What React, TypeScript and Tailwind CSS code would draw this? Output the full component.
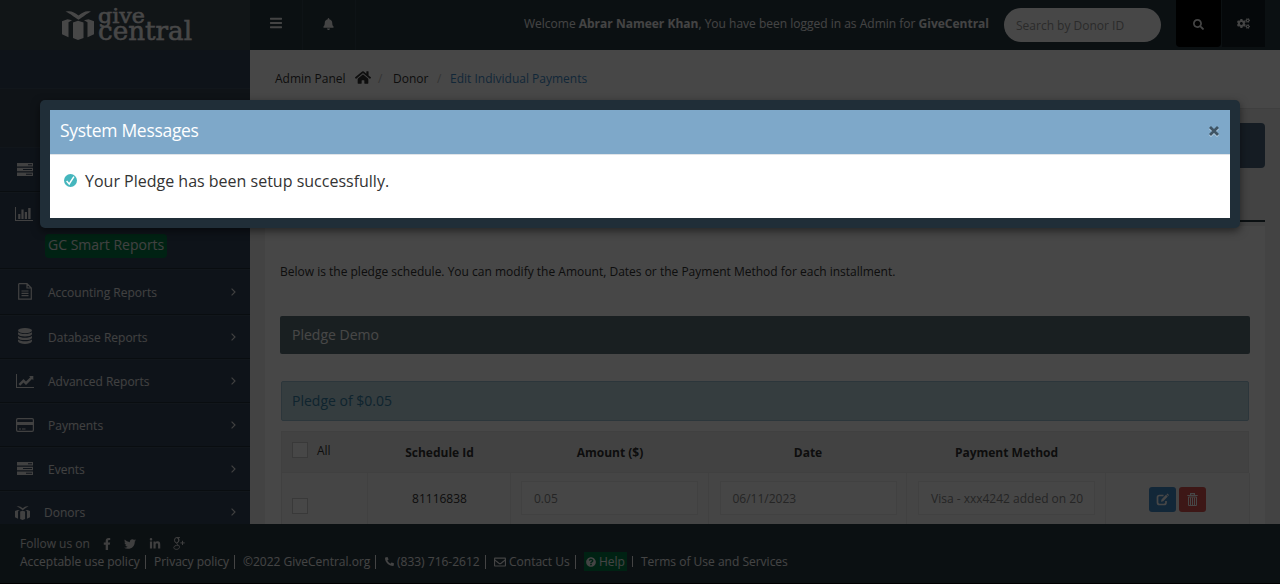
import type { ReactNode } from "react";
import {
  FaBars,
  FaBell,
  FaCogs,
  FaFacebookF,
  FaHome,
  FaLinkedinIn,
  FaPhoneAlt,
  FaQuestionCircle,
  FaRegEnvelope,
  FaSearch,
  FaTwitter,
} from "react-icons/fa";

function GiftIcon({ className }: { className: string }) {
  return (
    <svg viewBox="0 0 32 33" className={className} fill="currentColor" preserveAspectRatio="none">
      <path d="M3.500 3C9 1.500 12 3.500 16.500 7C21 3.500 24 1.500 29 3C25 4.500 22 8 16.500 11.500C11 8 8 4.500 3.500 3Z" />
      <path d="M0 13L5.500 11L10 12L6.500 14V30L0 27Z" />
      <path d="M32 13L26.500 11L22 12L25.500 14V30L32 27Z" />
      <path d="M11 14.500L16 12.500L21.500 14.500V31L16 33L11 31Z" />
    </svg>
  );
}

function TasksIcon() {
  return (
    <svg viewBox="0 0 16 13" className="h-[13px] w-4" fill="currentColor">
      <path fillRule="evenodd" d="M0 0H16V3.500H0ZM11 1.200V2.300H15V1.200Z" />
      <path fillRule="evenodd" d="M0 4.800H16V8.200H0ZM6 6V7H15V6Z" />
      <path fillRule="evenodd" d="M0 9.500H16V13H0ZM9 10.700V11.800H15V10.700Z" />
    </svg>
  );
}

function BarChartIcon() {
  return (
    <svg viewBox="0 0 18 14" className="h-[14px] w-[18px]" fill="currentColor">
      <path d="M0 0H1V13H18V14H0ZM3.200 7H5.400V12H3.200ZM6.400 2.500H8.600V12H6.400ZM9.800 5H12V12H9.800ZM13.200 1H15.600V12H13.200Z" />
    </svg>
  );
}

function FileIcon() {
  return (
    <svg viewBox="0 0 14 17" className="h-[17px] w-[14px]" fill="none" stroke="currentColor" strokeWidth="1.200">
      <path d="M1.200 .7H9L13.300 5V16.200H.7V1.200ZM9 .7V5H13.300M3.500 8H10.500M3.500 10.300H10.500M3.500 12.600H10.500" />
    </svg>
  );
}

function DatabaseIcon() {
  return (
    <svg viewBox="0 0 14 16" className="mb-px h-4 w-[14px]" fill="currentColor">
      <ellipse cx="7" cy="2.600" rx="7" ry="2.600" />
      <path d="M0 4.200C2.500 6.600 11.500 6.600 14 4.200V6.300C12.500 9.200 1.500 9.200 0 6.300Z" />
      <path d="M0 7.900C2.500 10.300 11.500 10.300 14 7.900V9.900C12.500 12.800 1.500 12.800 0 9.900Z" />
      <path d="M0 11.500C2.500 13.900 11.500 13.900 14 11.500V13.300C12.500 16.900 1.500 16.900 0 13.300Z" />
    </svg>
  );
}

function LineChartIcon() {
  return (
    <svg viewBox="0 0 18 14" className="h-[14px] w-[18px]" fill="currentColor">
      <path d="M0 0H1V13H18V14H0Z" />
      <path d="M2.500 10L7.500 5L10 7.500L14.300 3.200L13 2H17.300V6.300L16 5L10 10.900L7.500 8.400L4.200 11.700Z" />
    </svg>
  );
}

function CardIcon() {
  return (
    <svg viewBox="0 0 18 14" className="h-[14px] w-[18px]">
      <rect x=".6" y=".6" width="16.800" height="12.800" rx="1.300" fill="none" stroke="currentColor" strokeWidth="1.200" />
      <path d="M1 4H17V7H1ZM3 10.500H5V11.500H3ZM6 10.500H9.500V11.500H6Z" fill="currentColor" />
    </svg>
  );
}

function Chevron() {
  return (
    <svg viewBox="0 0 5 8" className="mr-[14px] mb-px h-2 w-[5px]" fill="none" stroke="currentColor" strokeWidth="1.100">
      <path d="M.6 .6L4 4L.6 7.400" />
    </svg>
  );
}

function GooglePlusIcon() {
  return (
    <svg viewBox="0 0 12 13" className="h-[13px] w-3" fill="none" stroke="currentColor" strokeWidth="1">
      <ellipse cx="3.600" cy="3.200" rx="2.100" ry="2.600" />
      <path d="M3.500 .6H7M4 5.800C3.300 7 4.500 7.200 5.300 8C8 10.500 5.500 12.400 3.500 12.400C1 12.400 -.3 10.300 2 8.900C3 8.300 4 8.300 5 8.200M5.200 1C6.500 2.500 6.200 5 4.300 5.800M9.500 3.800V8M7.400 5.900H11.700" />
    </svg>
  );
}

function EditIcon() {
  return (
    <svg viewBox="0 0 13 13" className="h-[13px] w-[13px]" fill="none" stroke="currentColor">
      <path strokeWidth="1.700" d="M7.500 2.500H3.500Q1.500 2.500 1.500 4.500V9.500Q1.500 11.500 3.500 11.500H8Q10 11.500 10 9.500V8" />
      <path fill="currentColor" stroke="none" d="M5 8.800L5.500 6.500L10 1.800L11.800 3.500L7.200 8.200ZM10.500 1.200L11.300 .4L13 2L12.200 2.900Z" />
    </svg>
  );
}

function TrashIcon() {
  return (
    <svg viewBox="0 0 11 13" className="h-[13px] w-[11px]" fill="none" stroke="currentColor">
      <path strokeWidth="1.200" d="M.3 2.500H10.700M3.600 2.300V.7H7.400V2.300" />
      <path strokeWidth="1" d="M1.500 4H9.500V12.500H1.500ZM3.500 4.500V12M5.500 4.500V12M7.500 4.500V12" />
    </svg>
  );
}

function Logo() {
  return (
    <div className="flex h-[50px] w-[250px] shrink-0 bg-[#3f4b55] pl-[62px] pt-[4px] text-white">
      <GiftIcon className="mt-[5px] h-[31px] w-8 shrink-0" />
      <svg viewBox="0 0 96 44" className="ml-[3px] h-11 w-24" fill="currentColor">
        <g fontFamily="'DejaVu Serif', serif" stroke="currentColor" strokeWidth=".5">
          <text x="1" y="18.500" fontSize="20" textLength="47" lengthAdjust="spacingAndGlyphs">give</text>
          <text x="1" y="35.500" fontSize="26" textLength="94" lengthAdjust="spacingAndGlyphs">central</text>
        </g>
      </svg>
    </div>
  );
}

function MenuRow({ icon, label, height }: { icon: ReactNode; label: string; height: string }) {
  return (
    <div className={`flex shrink-0 items-center border-b border-t border-b-[#222f3c] border-t-[#3f5060] ${height}`}>
      <span className="flex w-[48px]">
        <span className="flex w-[50px] shrink-0 justify-center pb-px">{icon}</span>
      </span>
      <span className="flex-1 pt-px">{label}</span>
      {label && <Chevron />}
    </div>
  );
}

function Sidebar() {
  return (
    <aside className="flex w-[250px] shrink-0 flex-col overflow-hidden bg-[#34465c] text-[#e8e8e8]">
      <div className="h-[38px] shrink-0" />
      <div className="h-[59px] shrink-0 border-t border-[#3f5060] bg-[#364552]" />
      <MenuRow icon={<TasksIcon />} label="" height="h-[45px]" />
      <div className="h-[77px] shrink-0 border-b border-t border-b-[#222f3c] border-t-[#3f5060]">
        <div className="flex h-[41px] items-center pl-[15px]">
          <BarChartIcon />
        </div>
        <span className="ml-[45px] inline-block h-6 rounded-sm bg-[#007a45] px-[3px] text-sm leading-[22px]">
          GC Smart Reports
        </span>
      </div>
      <MenuRow icon={<FileIcon />} label="Accounting Reports" height="h-[46px]" />
      <MenuRow icon={<DatabaseIcon />} label="Database Reports" height="h-[44px]" />
      <MenuRow icon={<LineChartIcon />} label="Advanced Reports" height="h-[44px]" />
      <MenuRow icon={<CardIcon />} label="Payments" height="h-[44px]" />
      <MenuRow icon={<TasksIcon />} label="Events" height="h-[44px]" />
      <div className="flex h-[42px] shrink-0 items-center border-t border-[#3f5060]">
        <GiftIcon className="ml-[15px] h-[15px] w-[15px]" />
        <span className="ml-[14px] flex-1">Donors</span>
        <Chevron />
      </div>
    </aside>
  );
}

function TopBar() {
  return (
    <header className="flex h-[50px] shrink-0 bg-[#293a43] text-[#f2f2f2]">
      <Logo />
      <div className="flex w-[53px] items-center justify-center border-r border-[#34454f] pb-1">
        <FaBars className="h-[14px] w-3" />
      </div>
      <div className="flex w-[53px] items-center justify-center border-r border-[#34454f] pb-[2px] pr-px">
        <FaBell className="h-3 w-[11px]" />
      </div>
      <p className="ml-auto whitespace-nowrap pr-[15px] leading-[47px]">
        Welcome <b>Abrar Nameer Khan</b>, You have been logged in as Admin for <b>GiveCentral</b>
      </p>
      <div className="mt-2 flex h-[34px] w-[157px] items-center rounded-full bg-white pl-3 pt-[2px] text-[#999999]">
        Search by Donor ID
      </div>
      <div className="ml-[15px] flex h-[47px] w-[45px] items-center justify-center rounded-b-sm bg-black pt-px">
        <FaSearch className="h-[11px] w-[11px]" />
      </div>
      <div className="ml-px mr-[15px] flex h-[47px] w-[43px] items-center justify-center bg-[#121d24]">
        <FaCogs className="h-[13px] w-[13px]" />
      </div>
    </header>
  );
}

function Field({ children }: { children: ReactNode }) {
  return (
    <div className="h-[34px] w-full overflow-hidden whitespace-nowrap border border-[#e9e9e9] bg-[#fbfbfb] pl-3 leading-[33px] text-[#858585]">
      {children}
    </div>
  );
}

function Checkbox() {
  return <span className="inline-block h-4 w-4 shrink-0 border border-[#cccccc] bg-white" />;
}

const columns = "grid grid-cols-[86px_143px_198px_198px_199px_144px]";

function PledgeTable() {
  return (
    <div className="mx-px mt-[10px] text-[#333333]">
      <div className={`${columns} h-[42px] border border-[#e6e6e6] bg-[#eeeeee] text-center font-bold leading-[42px]`}>
        <div className="flex items-start pl-[10px] pt-[10px] text-left font-normal leading-4">
          <Checkbox />
          <span className="pl-[9px] pt-px">All</span>
        </div>
        <div>Schedule Id</div>
        <div>Amount ($)</div>
        <div>Date</div>
        <div>Payment Method</div>
        <div />
      </div>
      <div className={`${columns} h-[52px] border-l border-[#e6e6e6] bg-[#f8f8f8]`}>
        <div className="border-r border-[#eaeaea] pl-[10px] pt-[25px]">
          <Checkbox />
        </div>
        <div className="border-r border-[#eaeaea] pl-px text-center leading-[52px]">81116838</div>
        <div className="border-r border-[#eaeaea] px-[10px] pt-2">
          <Field>0.05</Field>
        </div>
        <div className="border-r border-[#eaeaea] pl-[10.5px] pr-[9.5px] pt-2">
          <Field>06/11/2023</Field>
        </div>
        <div className="border-r border-[#eaeaea] pl-[11px] pr-[10px] pt-2">
          <Field>Visa - xxx4242 added on 20</Field>
        </div>
        <div className="flex gap-[3px] border-r border-[#eaeaea] pl-[43px] pt-[14px] text-white">
          <span className="flex h-[25px] w-[27px] items-center justify-center rounded-[3px] bg-[#428bca]">
            <EditIcon />
          </span>
          <span className="flex h-[25px] w-[27px] items-center justify-center rounded-[3px] bg-[#d9534f] pb-px">
            <TrashIcon />
          </span>
        </div>
      </div>
    </div>
  );
}

function Content() {
  return (
    <main className="flex min-w-0 flex-1 flex-col overflow-hidden bg-[#f0f0f0] text-[#333333]">
      <nav className="flex h-[59px] shrink-0 items-center border-b border-[#e0e0e0] bg-white pl-[25px]">
        <span className="w-[80px]">Admin Panel</span>
        <FaHome className="mb-[3px] h-[15px] w-4" />
        <span className="w-[22px] pl-[7px] text-[#bbbbbb]">/</span>
        <span className="w-[44px]">Donor</span>
        <span className="w-[13px] text-[#bbbbbb]">/</span>
        <span className="text-[#428bca]">Edit Individual Payments</span>
      </nav>
      <div className="mx-[15px] mt-[14px] h-[45px] shrink-0 rounded-sm bg-[#4b677f]" />
      <div className="mx-[15px] mt-[52px] h-[2px] shrink-0 bg-[#293a43]" />
      <section className="mx-[15px] mt-[4px] h-[400px] shrink-0 bg-[#fdfdfd] px-[15px] pt-[36px]">
        <p className="h-[54px] leading-[19px]">
          Below is the pledge schedule. You can modify the Amount, Dates or the Payment Method for each installment.
        </p>
        <h2 className="h-[38px] rounded-[2px] bg-[#5c6f76] pl-3 text-sm leading-[38px] text-white">Pledge Demo</h2>
        <h3 className="mx-px mt-[27px] h-10 rounded-[2px] border border-[#9fc3d2] bg-[#bddae3] pl-[10px] text-sm leading-[38px] text-[#3780a5]">
          Pledge of $0.05
        </h3>
        <PledgeTable />
      </section>
    </main>
  );
}

function Footer() {
  return (
    <footer className="h-[60px] shrink-0 border-b border-black bg-[#293a43] pl-5 pt-[10px] text-[#f2f2f2]">
      <div className="flex h-[18px] items-center pt-px text-[#e0e0e0]">
        <span className="w-[83px] pt-px">Follow us on</span>
        <FaFacebookF className="h-3 w-[8px]" />
        <FaTwitter className="ml-[13px] h-3 w-3" />
        <FaLinkedinIn className="ml-[13px] h-3 w-3" />
        <span className="ml-[12px]">
          <GooglePlusIcon />
        </span>
      </div>
      <div className="flex h-[19px] items-center whitespace-nowrap leading-[14px]">
        <span className="w-[126px] border-r">Acceptable use policy</span>
        <span className="w-[89px] border-r pl-2">Privacy policy</span>
        <span className="w-[141px] border-r pl-2">©2022 GiveCentral.org</span>
        <span className="flex w-[110px] items-center border-r pl-[9px]">
          <FaPhoneAlt className="mr-[3px] h-[9px] w-[9px]" />
          (833) 716-2612
        </span>
        <span className="flex w-[90px] items-center border-r pl-2">
          <FaRegEnvelope className="mr-[3px] h-3 w-3" />
          Contact Us
        </span>
        <span className="flex w-[57px] items-center border-r pl-2">
          <span className="-my-1 flex h-[19px] w-[43px] items-center bg-[#007a45] pl-[2px]">
            <FaQuestionCircle className="mr-[3px] h-[10px] w-[10px]" />
            Help
          </span>
        </span>
        <span className="pl-2">Terms of Use and Services</span>
      </div>
    </footer>
  );
}

function MessageDialog() {
  return (
    <div className="absolute left-10 top-[100px] w-[1200px] rounded-[5px] bg-[#202e38] p-[10px] shadow-[0_3px_9px_rgba(0,0,0,0.5)]">
      <div className="flex h-11 items-center justify-between bg-[#7ea8c9] px-[10px] text-white">
        <span className="pb-[2px] text-[17.5px] font-medium tracking-[-0.3px]">System Messages</span>
        <svg viewBox="0 0 12 12" className="mb-[2px] h-3 w-3" fill="none" strokeWidth="2.800">
          <path d="M2 3L10 11M10 3L2 11" stroke="#bfd5e6" />
          <path d="M2 2L10 10M10 2L2 10" stroke="#3f5464" />
        </svg>
      </div>
      <div className="flex h-16 items-start border-t border-[#e0e4e8] bg-white pl-[14px] pt-[14px] text-[16px] leading-6 text-[#333333]">
        <svg viewBox="0 0 14 14" className="mr-[8px] mt-[5px] h-[13px] w-[13px]">
          <circle cx="7" cy="7" r="7" fill="#45b6bd" />
          <path d="M2.800 7.500L5.600 10.700L10.700 2.800" fill="none" stroke="white" strokeWidth="1.600" />
        </svg>
        Your Pledge has been setup successfully.
      </div>
    </div>
  );
}

export default function App() {
  return (
    <div className="relative flex h-[584px] w-[1280px] flex-col overflow-hidden font-['Open_Sans',sans-serif] text-xs">
      <TopBar />
      <div className="flex min-h-0 flex-1">
        <Sidebar />
        <Content />
      </div>
      <Footer />
      <div className="absolute inset-0 bg-black/72" />
      <MessageDialog />
    </div>
  );
}
